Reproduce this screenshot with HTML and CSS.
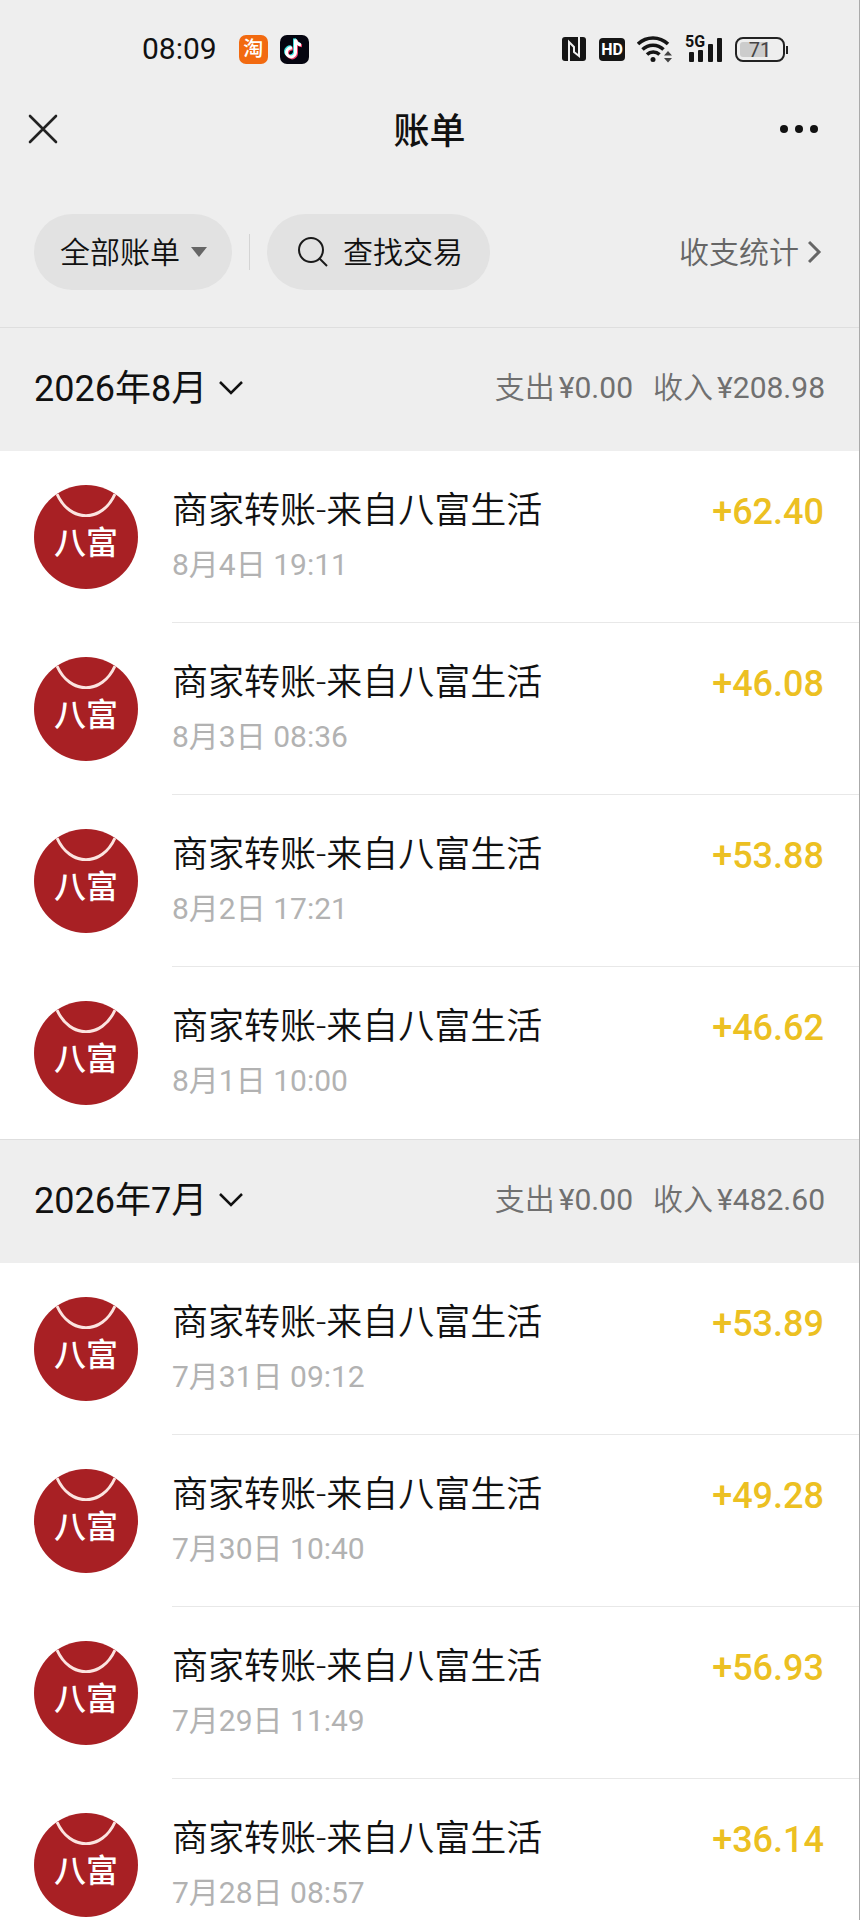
FILE: index.html
```
<!DOCTYPE html>
<html lang="zh-CN">
<head>
    <meta charset="utf-8">
    <meta name="viewport" content="width=device-width, initial-scale=1">
    <title>账单</title>
    <link rel="stylesheet" href="styles.css">
</head>

<body>
    <div class="app">
        <div class="status">
            <span class="clock">08:09</span>
            <span class="appIcon taobao">淘</span>
            <span class="appIcon douyin">
                <svg width="22" height="24" viewBox="0 0 22 24" fill="none" stroke-width="3">
                    <path d="M9 11a4.500 4.500 0 1 0 3.500 4.500V2.500c.5 3 2.500 5 5.500 5.300" stroke="#3ce0e0" transform="translate(-1 -1)" />
                    <path d="M9 11a4.500 4.500 0 1 0 3.500 4.500V2.500c.5 3 2.500 5 5.500 5.300" stroke="#f0406a" transform="translate(1 1)" />
                    <path d="M9 11a4.500 4.500 0 1 0 3.500 4.500V2.500c.5 3 2.500 5 5.500 5.300" stroke="#fff" />
                </svg>
            </span>

            <div class="signals">
                <svg width="25" height="26" viewBox="0 0 25 26">
                    <rect x="0" y="1" width="24" height="24" rx="3" fill="#151515" />
                    <path d="M7 25V6l5 5v5l5 4V1" fill="none" stroke="#eee" stroke-width="2" />
                </svg>
                <span class="hd">HD</span>
                <svg class="wifi" width="36" height="28" viewBox="0 0 36 28">
                    <g fill="none" stroke="#151515" stroke-width="3.500">
                        <path d="M1 9a21.500 21.500 0 0 1 30 0" />
                        <path d="M5.500 14.500a15 15 0 0 1 21 0" />
                        <path d="M10 19.500a9 9 0 0 1 12.500 0" />
                    </g>
                    <circle cx="16" cy="24.500" r="2.500" fill="#151515" />
                    <path d="M27 20.500l4-4.500 4 4.500zM27 23h8l-4 4.500z" fill="#444" />
                </svg>
                <span class="mobile">
                    <span class="net">5G</span>
                    <svg width="38" height="28" viewBox="0 0 38 28" fill="#151515">
                        <rect x="4" y="17" width="5" height="10" rx="1" />
                        <rect x="13" y="15" width="5" height="12" rx="1" />
                        <rect x="23" y="9" width="5" height="18" rx="1" />
                        <rect x="32" y="3" width="5" height="24" rx="1" />
                    </svg>
                </span>
                <span class="battery"><span class="level">71</span></span>
            </div>
        </div>

        <div class="nav">
            <button type="button" class="iconButton" aria-label="关闭">
                <svg width="30" height="30" viewBox="0 0 30 30" stroke="#222" stroke-width="2.600" stroke-linecap="round">
                    <path d="M2 2l26 26M28 2L2 28" />
                </svg>
            </button>
            <h1>账单</h1>
            <button type="button" class="iconButton more" aria-label="更多">
                <svg width="40" height="10" viewBox="0 0 40 10" fill="#111">
                    <circle cx="5" cy="5" r="4" />
                    <circle cx="20" cy="5" r="4" />
                    <circle cx="35" cy="5" r="4" />
                </svg>
            </button>
        </div>

        <div class="filters">
            <button type="button" class="pill">
                <span>全部账单</span>
                <svg width="16" height="10" viewBox="0 0 16 10"><path d="M0 0h16L8 10z" fill="#666" /></svg>
            </button>
            <span class="divider"></span>
            <button type="button" class="pill search">
                <svg width="30" height="30" viewBox="0 0 30 30" fill="none" stroke="#1a1a1a" stroke-width="2">
                    <circle cx="13" cy="13" r="12" />
                    <path d="M21.500 21.500l7.500 7.500" />
                </svg>
                <span>查找交易</span>
            </button>
            <a href="#" class="stats">
                <span>收支统计</span>
                <svg width="14" height="24" viewBox="0 0 14 24" fill="none" stroke="#666" stroke-width="3"><path d="M1 2l10 10L1 22" /></svg>
            </a>
        </div>

        <div class="bills">
            <div class="month">
                <button type="button" class="monthPicker">
                    <span>2026年8月</span>
                    <svg width="24" height="14" viewBox="0 0 24 14" fill="none" stroke="#111" stroke-width="2.500"><path d="M1 1l11 11L23 1" /></svg>
                </button>
                <div class="totals"><span>支出<b>¥0.00</b></span><span>收入<b>¥208.98</b></span></div>
            </div>
            <ul>
                <li>
                    <div class="avatar"><svg width="104" height="32" viewBox="0 0 104 32"><path d="M23 9c13 29 45 29 58 0" /></svg><span>八富</span></div>
                    <div class="bill">
                        <div class="info"><p class="name">商家转账-来自八富生活</p><p class="time">8月4日 19:11</p></div>
                        <span class="amount">+62.40</span>
                    </div>
                </li>
                <li>
                    <div class="avatar"><svg width="104" height="32" viewBox="0 0 104 32"><path d="M23 9c13 29 45 29 58 0" /></svg><span>八富</span></div>
                    <div class="bill">
                        <div class="info"><p class="name">商家转账-来自八富生活</p><p class="time">8月3日 08:36</p></div>
                        <span class="amount">+46.08</span>
                    </div>
                </li>
                <li>
                    <div class="avatar"><svg width="104" height="32" viewBox="0 0 104 32"><path d="M23 9c13 29 45 29 58 0" /></svg><span>八富</span></div>
                    <div class="bill">
                        <div class="info"><p class="name">商家转账-来自八富生活</p><p class="time">8月2日 17:21</p></div>
                        <span class="amount">+53.88</span>
                    </div>
                </li>
                <li>
                    <div class="avatar"><svg width="104" height="32" viewBox="0 0 104 32"><path d="M23 9c13 29 45 29 58 0" /></svg><span>八富</span></div>
                    <div class="bill">
                        <div class="info"><p class="name">商家转账-来自八富生活</p><p class="time">8月1日 10:00</p></div>
                        <span class="amount">+46.62</span>
                    </div>
                </li>
            </ul>

            <div class="month">
                <button type="button" class="monthPicker">
                    <span>2026年7月</span>
                    <svg width="24" height="14" viewBox="0 0 24 14" fill="none" stroke="#111" stroke-width="2.500"><path d="M1 1l11 11L23 1" /></svg>
                </button>
                <div class="totals"><span>支出<b>¥0.00</b></span><span>收入<b>¥482.60</b></span></div>
            </div>
            <ul>
                <li>
                    <div class="avatar"><svg width="104" height="32" viewBox="0 0 104 32"><path d="M23 9c13 29 45 29 58 0" /></svg><span>八富</span></div>
                    <div class="bill">
                        <div class="info"><p class="name">商家转账-来自八富生活</p><p class="time">7月31日 09:12</p></div>
                        <span class="amount">+53.89</span>
                    </div>
                </li>
                <li>
                    <div class="avatar"><svg width="104" height="32" viewBox="0 0 104 32"><path d="M23 9c13 29 45 29 58 0" /></svg><span>八富</span></div>
                    <div class="bill">
                        <div class="info"><p class="name">商家转账-来自八富生活</p><p class="time">7月30日 10:40</p></div>
                        <span class="amount">+49.28</span>
                    </div>
                </li>
                <li>
                    <div class="avatar"><svg width="104" height="32" viewBox="0 0 104 32"><path d="M23 9c13 29 45 29 58 0" /></svg><span>八富</span></div>
                    <div class="bill">
                        <div class="info"><p class="name">商家转账-来自八富生活</p><p class="time">7月29日 11:49</p></div>
                        <span class="amount">+56.93</span>
                    </div>
                </li>
                <li>
                    <div class="avatar"><svg width="104" height="32" viewBox="0 0 104 32"><path d="M23 9c13 29 45 29 58 0" /></svg><span>八富</span></div>
                    <div class="bill">
                        <div class="info"><p class="name">商家转账-来自八富生活</p><p class="time">7月28日 08:57</p></div>
                        <span class="amount">+36.14</span>
                    </div>
                </li>
            </ul>
        </div>
    </div>
</body>

</html>
```

FILE: styles.css
```
* {
    box-sizing: border-box;
}

body {
    margin: 0;
    background: #eee;
    color: #111;
    font-family: Roboto, "Noto Sans CJK SC", sans-serif;
    font-size: 30px;
    font-weight: 350;
}

h1, ul, p {
    margin: 0;
    padding: 0;
}

button {
    border: none;
    padding: 0;
    background: none;
    color: inherit;
    font: inherit;
}

svg {
    flex: none;
}

.app {
    display: flex;
    flex-direction: column;
    height: 100vh;
    border-right: 1px solid #aaa;
}

/* phone status bar */
.status {
    display: flex;
    align-items: center;
    padding: 31px 74px 17px 142px;
    line-height: 36px;
    font-weight: 400;
}

.clock {
    margin-right: 22px;
}

.appIcon {
    display: flex;
    align-items: center;
    justify-content: center;
    width: 29px;
    height: 29px;
    margin-right: 12px;
    border-radius: 7px;
}

.taobao {
    background: #f26a10;
    color: #fff;
    font-size: 20px;
    font-weight: 500;
}

.douyin {
    background: #050510;
}

.signals {
    display: flex;
    align-items: center;
    gap: 12px;
    margin-left: auto;
}

.hd {
    width: 26px;
    height: 23px;
    border-radius: 4px;
    background: #151515;
    color: #fff;
    font-size: 16px;
    font-weight: 700;
    line-height: 23px;
    text-align: center;
}

.mobile {
    display: flex;
    position: relative;
}

.net {
    position: absolute;
    top: 0;
    left: 0;
    font-size: 16px;
    font-weight: 700;
    line-height: 14px;
}

.battery {
    display: flex;
    position: relative;
    width: 50px;
    height: 25px;
    padding: 3px;
    border: 2px solid #222;
    border-radius: 8px;
}

    .battery:after {
        content: "";
        position: absolute;
        top: 7px;
        right: -5px;
        width: 2px;
        height: 8px;
        background: #222;
    }

.level {
    flex: 1;
    border-radius: 3px;
    background: linear-gradient(90deg, #ccc 71%, transparent 71%);
    color: #444;
    font-size: 20px;
    line-height: 16px;
    text-align: center;
}

.nav {
    display: flex;
    align-items: center;
    justify-content: space-between;
    height: 90px;
    padding: 0 28px;
}

    .nav h1 {
        padding-bottom: 2px;
        font-size: 36px;
        font-weight: 500;
    }

.iconButton {
    display: flex;
    width: 52px;
}

.more {
    justify-content: flex-end;
    padding-right: 12px;
}

.filters {
    display: flex;
    align-items: center;
    padding: 40px 37px 37px 34px;
}

    .filters button span, .filters a span {
        padding-bottom: 4px;
    }

.pill {
    display: flex;
    align-items: center;
    gap: 11px;
    height: 76px;
    padding: 0 25px 0 26px;
    border-radius: 38px;
    background: #e2e2e2;
}

.search {
    gap: 15px;
    padding: 0 27px 0 31px;
}

.divider {
    width: 1px;
    height: 36px;
    margin: 0 17px;
    background: #d4d4d4;
}

.stats {
    display: flex;
    align-items: center;
    gap: 9px;
    margin-left: auto;
    color: #666;
    text-decoration: none;
}

.bills {
    flex: 1;
    min-height: 0;
    overflow-y: auto;
    scrollbar-width: none;
}

.month {
    display: flex;
    align-items: center;
    justify-content: space-between;
    height: 124px;
    padding: 0 34px 4px;
    border-top: 1px solid #dedede;
}

    .month span {
        padding-bottom: 6px;
    }

.monthPicker {
    display: flex;
    align-items: center;
    gap: 12px;
    font-size: 36px;
    font-weight: 400;
}

.totals {
    display: flex;
    gap: 20px;
    color: #707070;
}

    .totals b {
        margin-left: 4px;
        font-weight: 400;
    }

.bills ul {
    background: #fff;
    list-style: none;
}

.bills li {
    display: flex;
    gap: 34px;
    padding-left: 34px;
}

.avatar {
    flex: none;
    width: 104px;
    height: 104px;
    margin-top: 34px;
    border-radius: 50%;
    background: #a82024;
    color: #fff;
    font-size: 32px;
    font-weight: 500;
    line-height: 52px;
    text-align: center;
    overflow: hidden;
}

    .avatar svg {
        display: block;
        fill: none;
        stroke: #fbe4e0;
        stroke-width: 3;
    }

.bill {
    display: flex;
    flex: 1;
    justify-content: space-between;
    height: 172px;
    padding: 36px 35px 0 0;
    border-bottom: 1px solid #e8e8e8;
}

.bills li:last-child .bill {
    border-bottom: none;
}

.name {
    font-size: 36px;
    line-height: 48px;
}

.time {
    margin-top: 6px;
    color: #b2b2b2;
    font-weight: 400;
    line-height: 48px;
}

.amount {
    color: #ecc022;
    font-size: 36px;
    font-weight: 500;
    line-height: 50px;
}
```
